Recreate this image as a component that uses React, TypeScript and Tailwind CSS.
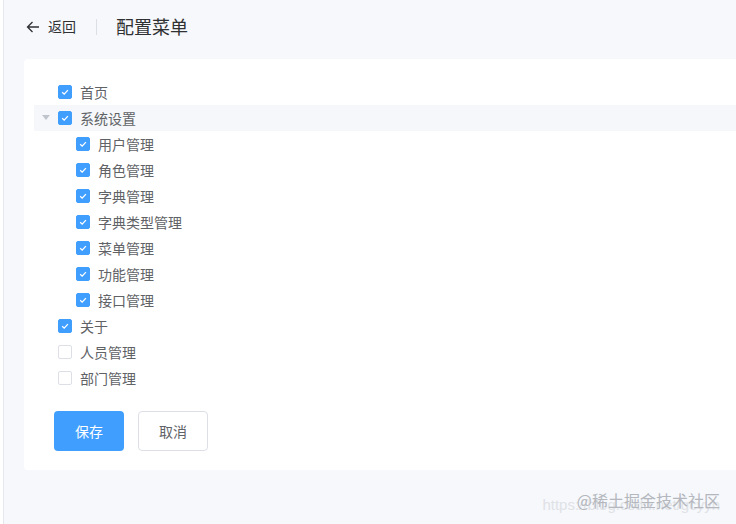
import React from "react";

type Node = { label: string; checked: boolean; children?: Node[]; highlight?: boolean };

const tree: Node[] = [
  { label: "首页", checked: true },
  {
    label: "系统设置",
    checked: true,
    highlight: true,
    children: [
      { label: "用户管理", checked: true },
      { label: "角色管理", checked: true },
      { label: "字典管理", checked: true },
      { label: "字典类型管理", checked: true },
      { label: "菜单管理", checked: true },
      { label: "功能管理", checked: true },
      { label: "接口管理", checked: true },
    ],
  },
  { label: "关于", checked: true },
  { label: "人员管理", checked: false },
  { label: "部门管理", checked: false },
];

function Checkbox({ checked }: { checked: boolean }) {
  return checked ? (
    <span className="w-[14px] h-[14px] rounded-[2px] bg-[#409eff] border border-[#409eff] flex items-center justify-center shrink-0">
      <svg width="10" height="10" viewBox="0 0 10 10">
        <path d="M2.2 5.2 L4.2 7.1 L7.9 3.1" fill="none" stroke="white" strokeWidth="1.3" />
      </svg>
    </span>
  ) : (
    <span className="w-[14px] h-[14px] rounded-[2px] bg-white border border-[#dcdfe6] shrink-0" />
  );
}

function Row({ node, level }: { node: Node; level: number }) {
  return (
    <>
      <div
        className={`h-[26px] flex items-center ${node.highlight ? "bg-[#f5f7fa]" : ""}`}
        style={{ paddingLeft: level * 18 }}
      >
        <span className="w-[24px] h-[24px] flex items-center justify-center shrink-0">
          {node.children ? (
            <svg width="8" height="6" viewBox="0 0 8 6">
              <path d="M0 0 L8 0 L4 5 Z" fill="#c0c4cc" />
            </svg>
          ) : null}
        </span>
        <Checkbox checked={node.checked} />
        <span className="ml-[8px] text-[14px] text-[#606266] leading-none">{node.label}</span>
      </div>
      {node.children?.map((c) => <Row key={c.label} node={c} level={level + 1} />)}
    </>
  );
}

export default function App() {
  return (
    <div
      className="w-[736px] h-[524px] bg-white pl-[3px] overflow-hidden"
      style={{ fontFamily: '"Noto Sans CJK SC", "Liberation Sans", sans-serif' }}
    >
      <div className="h-full border-l border-[#e4e7ed] bg-[#f6f8fc] flex flex-col relative">
        <div className="h-[59px] flex items-center pl-[22px] pb-[6px]">
          <svg width="14" height="14" viewBox="0 0 14 14" className="mr-[8px]">
            <path d="M13 7 H1.5 M6.5 2 L1.5 7 L6.5 12" fill="none" stroke="#303133" strokeWidth="1.3" />
          </svg>
          <span className="text-[14px] text-[#303133]">返回</span>
          <span className="w-px h-[16px] bg-[#dcdfe6] mx-[20px]" />
          <span className="text-[18px] text-[#303133] -ml-px">配置菜单</span>
        </div>
        <div className="ml-[20px] bg-white rounded-l-[4px] h-[411px] pt-[20px] pl-[10px]">
          {tree.map((n) => (
            <Row key={n.label} node={n} level={0} />
          ))}
          <div className="flex gap-[14px] mt-[20px] ml-[20px]">
            <button className="w-[70px] h-[40px] rounded-[4px] bg-[#409eff] text-white text-[14px]">保存</button>
            <button className="w-[70px] h-[40px] rounded-[4px] bg-white border border-[#dcdfe6] text-[#606266] text-[14px]">
              取消
            </button>
          </div>
        </div>
        <div className="absolute right-[16px] bottom-[14px] w-[190px] h-[22px]">
          <span className="absolute right-[0px] top-[6px] text-[15px] text-[#e0e2e6] whitespace-nowrap" style={{ fontFamily: '"Liberation Sans", sans-serif' }}>
            https://blog.csdn.net/gcyyn
          </span>
          <span className="absolute right-[0px] top-[0px] text-[16px] text-[#b4b7bd] whitespace-nowrap">@稀土掘金技术社区</span>
        </div>
      </div>
    </div>
  );
}
